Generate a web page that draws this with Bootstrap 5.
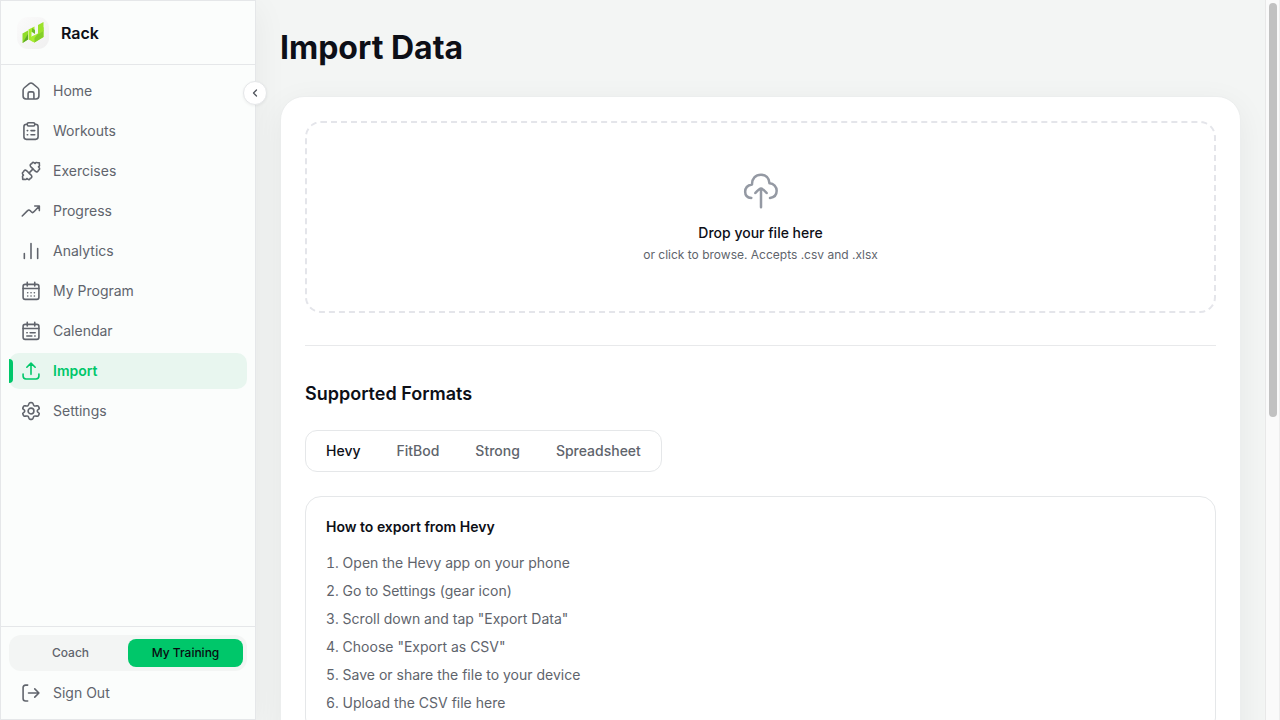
<!DOCTYPE html>
<html lang="en">
<head>
<meta charset="utf-8">
<meta name="viewport" content="width=device-width, initial-scale=1">
<title>Rack – Import Data</title>
<link href="https://cdn.jsdelivr.net/npm/bootstrap@5.3.0/dist/css/bootstrap.min.css" rel="stylesheet">
<style>
  :root { --ink: #0d0f17; --muted: #60646c; --line: #e5e7e9; --green: #00c76a; }
  body { font-family: Inter, "Liberation Sans", sans-serif; font-size: 14px; line-height: 20px; color: var(--ink); background: #f3f5f4; }
  svg { fill: none; stroke: currentColor; stroke-width: 1.5; stroke-linecap: round; stroke-linejoin: round; flex: none; }
  .sidebar { width: 256px; background: #fbfdfc; border: 1px solid var(--line); box-shadow: 0 8px 32px rgba(0,0,0,.06); z-index: 2; }
  .brand-row { height: 64px; padding: 0 16px; border-bottom: 1px solid var(--line); font-size: 16px; line-height: 24px; }
  .brand-row svg { stroke: none; }
  .side-link { height: 36px; padding: 0 12px; border-radius: 10px; color: var(--muted); text-decoration: none; border: 0; background: none; }
  .side-link svg { stroke-width: 1.9; }
  .side-link.active { color: var(--green); background: #e8f6ef; font-weight: 600; }
  .side-link.active::before { content: ""; position: absolute; left: 0; top: 6px; width: 4px; height: 24px; background: var(--green); border-radius: 0 4px 4px 0; }
  .side-foot { border-top: 1px solid var(--line); }
  .mode-switch { height: 36px; border-radius: 12px; background: #f3f5f4; }
  .mode-switch button { border: 0; border-radius: 8px; background: none; color: var(--muted); font-size: 12px; line-height: 16px; font-weight: 500; }
  .mode-switch button.on { background: var(--green); color: #090b10; }
  .fold-btn { position: absolute; top: 80px; right: -12px; width: 24px; height: 24px; border: 1px solid var(--line); background: #fff; color: #50545c; box-shadow: 0 1px 3px rgba(0,0,0,.06); }
  .fold-btn svg { stroke-width: 2.5; }
  .page-title { font-size: 32px; line-height: 48px; font-weight: 700; }
  .panel-card { background: #fff; border: 1px solid #eceeee; border-radius: 24px; box-shadow: 0 8px 32px rgba(0,0,0,.06); }
  .drop-zone { height: 192px; border: 2px dashed #e4e5ea; border-radius: 16px; cursor: pointer; }
  .drop-zone svg { color: #9499a3; }
  .small-note { font-size: 12px; line-height: 16px; color: var(--muted); }
  .formats { border-top: 1px solid #e8e9eb; margin-top: 32px; padding-top: 32px; }
  .section-title { font-size: 18px; line-height: 32px; font-weight: 600; margin-bottom: 20px; }
  .format-tabs { border: 1px solid var(--line); border-radius: 12px; }
  .format-tabs button { height: 32px; padding: 0 16px; border: 0; background: none; color: var(--muted); font-weight: 500; }
  .format-tabs button.active { color: var(--ink); }
  .guide { border: 1px solid var(--line); border-radius: 16px; padding: 20px; }
  .guide h3 { font-size: 14px; line-height: 20px; }
  .guide ol { list-style-position: inside; color: var(--muted); }
  .scroll-track { width: 15px; background: #fafafa; border-left: 1px solid #e8e8e8; border-right: 1px solid #ededed; padding: 3px; }
  .scroll-thumb { width: 8px; height: 58%; border-radius: 4px; background: #c1c1c1; }
</style>
</head>
<body>
<div class="d-flex vh-100 overflow-hidden">
  <aside class="sidebar position-relative d-flex flex-column flex-shrink-0">
    <div class="brand-row d-flex align-items-center fw-semibold">
      <svg width="32" height="32" viewBox="0 0 32 32" aria-hidden="true">
        <defs><linearGradient id="tile" x2="1" y2="1"><stop stop-color="#fbfbfb"/><stop offset="1" stop-color="#f0f0f0"/></linearGradient></defs>
        <rect width="32" height="32" rx="11" fill="url(#tile)"/>
        <path fill="#8fdc27" d="M5.500 16.500 11 13.500V22.500L5.500 26z"/>
        <path fill="#5fa82a" d="M5.500 26 11 17v5.500z"/>
        <path fill="#a6ea2c" d="M11.500 12.500 17.500 9.500V13.500L14.500 15V20L17.500 21V25.500L11.500 22.500z"/>
        <path fill="#6dbb28" d="M15 11l3 2v4l-3-2z"/>
        <path fill="#a9ec32" d="M14.500 19.500 21 16.500 26.500 13V20L17.500 25.500 14.500 24z"/>
        <path fill="#84cf28" d="M17.500 25.500V21L26.500 10V20z"/>
        <path fill="#9be22b" d="M21 8 26.500 5V14L21 17.500z"/>
      </svg>
      <span class="ms-2 ps-1">Rack</span>
    </div>
    <nav class="d-flex flex-column gap-1 p-2 flex-grow-1" aria-label="Main">
      <a class="side-link d-flex align-items-center gap-2 position-relative" href="#"><svg width="20" height="20" viewBox="0 0 24 24"><path d="M2.500 11c0-1.300.4-2 1.500-2.900l6-4.900c1.500-1.200 2.500-1.200 4 0l6 4.900c1.100.9 1.500 1.600 1.500 2.900v7c0 2.500-1 3.500-3.500 3.500H6c-2.500 0-3.500-1-3.500-3.500zM8.500 21.500V15c0-1.500.5-2 2-2h3c1.500 0 2 .5 2 2v6.500"/></svg><span class="ms-1">Home</span></a>
      <a class="side-link d-flex align-items-center gap-2 position-relative" href="#"><svg width="20" height="20" viewBox="0 0 24 24"><rect x="7.500" y="2" width="9" height="4" rx="1.500"/><path d="M7.500 3.800H6.500c-2 0-3 1-3 3V19c0 2 1 3 3 3h11c2 0 3-1 3-3V6.800c0-2-1-3-3-3h-1M7.500 11.500h.5M7.500 16.500h.5M12 11.500h4.500M12 16.500h4.500"/></svg><span class="ms-1">Workouts</span></a>
      <a class="side-link d-flex align-items-center gap-2 position-relative" href="#"><svg width="20" height="20" viewBox="0 0 24 24"><path d="m9.500 14.500 5-5M11.500 6.500a2 2 0 0 1 1.500-3.300c.2-1.200 1.400-1.900 2.500-1.300l1.500 1.100c.5-1.200 1.800-1.500 2.900-1h2.100v2.200c.5 1.100.2 2.300-1 2.800l1.100 1.500c.6 1.100-.1 2.300-1.300 2.500a2 2 0 0 1-3.300 1.500l-1.500-1.300-1.500-1.700-1.700-1.500zM12.500 17.500a2 2 0 0 1-1.500 3.300c-.2 1.200-1.400 1.900-2.500 1.300L7 21c-.5 1.200-1.800 1.500-2.900 1H2v-2.200c-.5-1.100-.2-2.300 1-2.800l-1.100-1.500c-.6-1.100.1-2.300 1.300-2.500a2 2 0 0 1 3.300-1.500L8 12.800l1.500 1.700 1.700 1.500z"/></svg><span class="ms-1">Exercises</span></a>
      <a class="side-link d-flex align-items-center gap-2 position-relative" href="#"><svg width="20" height="20" viewBox="0 0 24 24"><path d="M16.500 6H22v5.500M21.500 6.500l-5.700 6.200c-1.500 1.600-2.300 1.600-3.800 0l-.8-.9c-1.400-1.500-2.200-1.400-3.600.1L1.500 18"/></svg><span class="ms-1">Progress</span></a>
      <a class="side-link d-flex align-items-center gap-2 position-relative" href="#"><svg width="20" height="20" viewBox="0 0 24 24"><path d="M4 21v-6M12 21V3M20 21V9"/></svg><span class="ms-1">Analytics</span></a>
      <a class="side-link d-flex align-items-center gap-2 position-relative" href="#"><svg width="20" height="20" viewBox="0 0 24 24"><rect x="2.500" y="4" width="19" height="18" rx="2.500"/><path d="M7.500 1.500V6M16.500 1.500V6M2.500 9h19M8 14h.1M12 14h.1M16 14h.1M8 18h.1M12 18h.1M16 18h.1"/></svg><span class="ms-1">My Program</span></a>
      <a class="side-link d-flex align-items-center gap-2 position-relative" href="#"><svg width="20" height="20" viewBox="0 0 24 24"><rect x="2.500" y="4" width="19" height="18" rx="2.500"/><path d="M7.500 1.500V6M16.500 1.500V6M2.500 9h19M7 14h.5M11 14h6M7 18h6M16.500 18h.5"/></svg><span class="ms-1">Calendar</span></a>
      <a class="side-link active d-flex align-items-center gap-2 position-relative" href="#" aria-current="page"><svg width="20" height="20" viewBox="0 0 24 24"><path d="M12 16V3M7 7.500 12 2.500l5 5M2.500 15.500V18c0 2.500 1 3.500 3.500 3.500h12c2.500 0 3.500-1 3.500-3.500v-2.500"/></svg><span class="ms-1">Import</span></a>
      <a class="side-link d-flex align-items-center gap-2 position-relative" href="#"><svg width="20" height="20" viewBox="0 0 24 24"><circle cx="12" cy="12" r="3.500"/><path d="M21.300 7.200c-.5-.9-.8-1.300-1.300-1.500-.9-.4-2.800 1-4.200.1-1.600-1-.7-3.200-2.300-3.700a6 6 0 0 0-3 0c-1.600.5-.7 2.700-2.300 3.700-1.400.9-3.300-.5-4.200-.1-.5.200-.8.600-1.300 1.500-.5.900-.7 1.300-.6 1.800.2 1 2.400 1.300 2.400 3s-2.200 2-2.400 3c-.1.500.1.900.6 1.800s.8 1.300 1.300 1.500c.9.400 2.800-1 4.200-.1 1.600 1 .7 3.200 2.300 3.700a6 6 0 0 0 3 0c1.600-.5.700-2.700 2.300-3.700 1.400-.9 3.300.5 4.200.1.500-.2.800-.6 1.300-1.500s.7-1.300.6-1.800c-.2-1-2.400-1.300-2.400-3s2.200-2 2.400-3c.1-.5-.1-.9-.6-1.800z"/></svg><span class="ms-1">Settings</span></a>
    </nav>
    <div class="side-foot d-flex flex-column gap-1 p-2">
      <div class="mode-switch d-flex p-1" role="group" aria-label="View mode">
        <button type="button" class="w-50">Coach</button>
        <button type="button" class="w-50 on">My Training</button>
      </div>
      <button type="button" class="side-link d-flex align-items-center gap-2 w-100"><svg width="20" height="20" viewBox="0 0 24 24"><path d="M8 2.500H5.500c-2 0-3 1-3 3v13c0 2 1 3 3 3H8M9 12h12.500M16.500 7l5 5-5 5"/></svg><span class="ms-1">Sign Out</span></button>
    </div>
    <button type="button" class="fold-btn rounded-circle d-flex align-items-center justify-content-center p-0" aria-label="Collapse sidebar"><svg width="12" height="12" viewBox="0 0 24 24"><path d="m15 6-6 6 6 6"/></svg></button>
  </aside>

  <main class="flex-grow-1 overflow-hidden p-4">
    <h1 class="page-title mb-4">Import Data</h1>
    <div class="panel-card p-4">
      <label class="drop-zone d-flex flex-column align-items-center justify-content-center">
        <input type="file" class="visually-hidden" accept=".csv,.xlsx">
        <svg width="40" height="40" viewBox="0 0 24 24"><path d="M17.400 16.200c2.500-.3 4-2 4-4.300 0-2.500-1.800-4.400-4.300-4.500C16.900 4.200 14.800 2.200 12 2.200c-3.300 0-5.500 2.300-5.400 5.900-2.600.5-4.100 2-4.100 4.300 0 2.200 1.300 3.600 3.700 3.800M12 21.800V10.600M8.600 13.200c.9-1 2.400-2.700 3.400-2.700s2.500 1.700 3.400 2.700"/></svg>
        <span class="fw-medium mt-2 pt-1">Drop your file here</span>
        <span class="small-note mt-1">or click to browse. Accepts .csv and .xlsx</span>
      </label>
      <div class="formats">
        <h2 class="section-title">Supported Formats</h2>
        <div class="format-tabs d-inline-flex gap-1 p-1" role="tablist" aria-label="Formats">
          <button type="button" role="tab" aria-selected="true" class="active">Hevy</button>
          <button type="button" role="tab" aria-selected="false">FitBod</button>
          <button type="button" role="tab" aria-selected="false">Strong</button>
          <button type="button" role="tab" aria-selected="false">Spreadsheet</button>
        </div>
        <section class="guide mt-4">
          <h3 class="fw-semibold mb-3">How to export from Hevy</h3>
          <ol class="d-flex flex-column gap-2 p-0 m-0">
            <li>Open the Hevy app on your phone</li>
            <li>Go to Settings (gear icon)</li>
            <li>Scroll down and tap "Export Data"</li>
            <li>Choose "Export as CSV"</li>
            <li>Save or share the file to your device</li>
            <li>Upload the CSV file here</li>
          </ol>
        </section>
      </div>
    </div>
  </main>
  <div class="scroll-track flex-shrink-0" aria-hidden="true"><div class="scroll-thumb"></div></div>
</div>
<script src="https://cdn.jsdelivr.net/npm/bootstrap@5.3.0/dist/js/bootstrap.bundle.min.js"></script>
</body>
</html>
